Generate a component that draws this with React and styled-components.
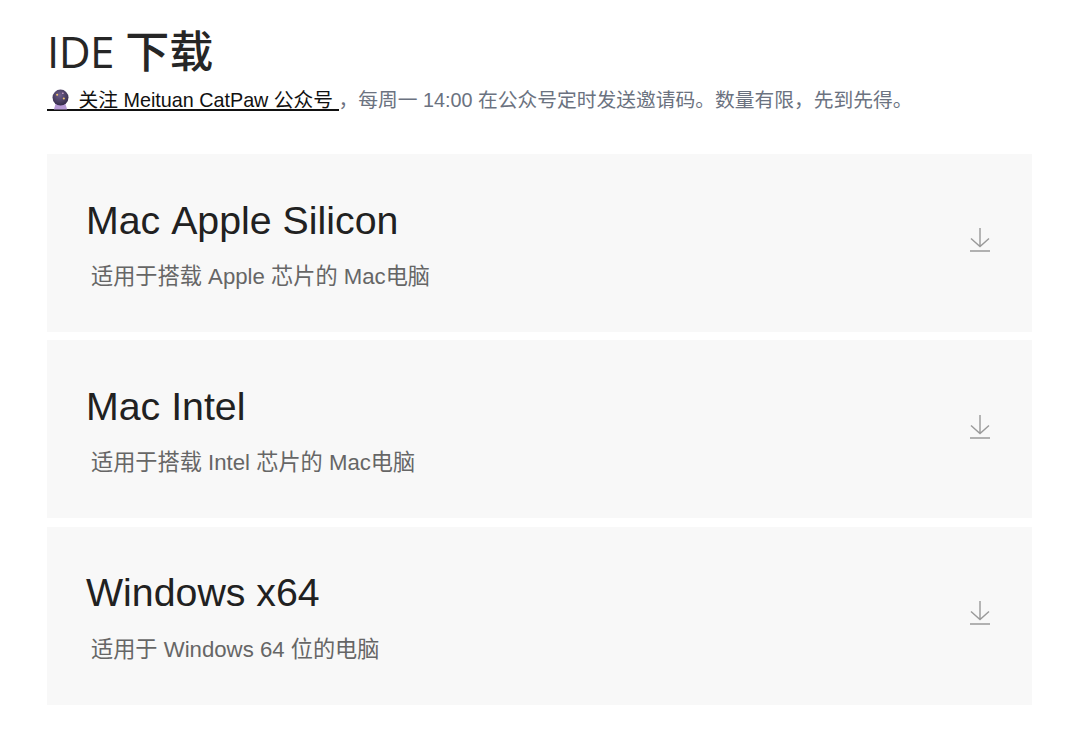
import React from 'react'
import styled, { createGlobalStyle } from 'styled-components'

const downloads = [
  { title: 'Mac Apple Silicon', desc: '适用于搭载 Apple 芯片的 Mac电脑' },
  { title: 'Mac Intel', desc: '适用于搭载 Intel 芯片的 Mac电脑' },
  { title: 'Windows x64', desc: '适用于 Windows 64 位的电脑' },
]

function CrystalBall() {
  return (
    <BallIcon viewBox="0 0 20 22">
      <defs>
        <radialGradient id="ball" cx="0.45" cy="0.35" r="0.75">
          <stop offset="0" stopColor="#6f5f8c" />
          <stop offset="1" stopColor="#2c2440" />
        </radialGradient>
      </defs>
      <path d="M5 15h10l2 6.5H3z" fill="#b79ad6" />
      <circle cx="10" cy="9" r="8.4" fill="url(#ball)" />
      <circle cx="6.5" cy="6" r="1.1" fill="#f2c66d" />
      <circle cx="12.5" cy="4.4" r="0.8" fill="#e9b7e0" />
      <circle cx="13.5" cy="10" r="1.1" fill="#f2c66d" />
    </BallIcon>
  )
}

function DownloadIcon() {
  return (
    <ArrowIcon viewBox="0 0 20 24">
      <path d="M10 0V18.5M1 10.5L10 18.5L19 10.5M0 23H20" />
    </ArrowIcon>
  )
}

export default function App() {
  return (
    <Page>
      <GlobalStyle />
      <Heading><Latin>IDE</Latin> <strong>下载</strong></Heading>
      <Intro>
        <FollowLink href="#"><CrystalBall /> 关注 Meituan CatPaw 公众号 </FollowLink>
        ，每周一 14:00 在公众号定时发送邀请码。数量有限，先到先得。
      </Intro>
      <CardList>
        {downloads.map((item) => (
          <Card key={item.title}>
            <CardText>
              <CardTitle>{item.title}</CardTitle>
              <CardDesc>{item.desc}</CardDesc>
            </CardText>
            <DownloadIcon />
          </Card>
        ))}
      </CardList>
    </Page>
  )
}

const GlobalStyle = createGlobalStyle`
  html, body {
    margin: 0;
    background: #fff;
  }
`
const Page = styled.div`
  box-sizing: border-box;
  width: 1080px;
  height: 744px;
  overflow: hidden;
  padding: 19px 48px 0 47px;
  font-family: "Liberation Sans", "Noto Sans CJK SC", sans-serif;
`
const Heading = styled.h1`
  margin: 0;
  height: 60px;
  font-family: "Open Sans", "Noto Sans CJK SC", sans-serif;
  font-size: 44px;
  line-height: 60px;
  font-weight: 400;
  color: #262626;

  & strong {
    font-family: "Noto Sans CJK SC", sans-serif;
    font-weight: 500;
  }
`
const Latin = styled.span`
  letter-spacing: -0.6px;
`
const Intro = styled.p`
  margin: 8px 0 0;
  height: 30px;
  font-size: 19.75px;
  line-height: 26px;
  color: #6b7280;
  white-space: nowrap;
`
const FollowLink = styled.a`
  padding-left: 4px;
  color: #111;
  text-decoration: none;
  background: linear-gradient(#111, #111) no-repeat 0 100% / 100% 2px;
`
const BallIcon = styled.svg`
  width: 19px;
  height: 21px;
  margin-right: 3px;
  vertical-align: -3px;
`
const CardList = styled.div`
  display: flex;
  flex-direction: column;
  gap: 8.4px;
  margin-top: 37px;
`
const Card = styled.div`
  box-sizing: border-box;
  display: flex;
  align-items: center;
  justify-content: space-between;
  height: 178px;
  padding: 0 42px 0.5px 39px;
  background: #f8f8f8;
`
const CardText = styled.div`
  display: flex;
  flex-direction: column;
  gap: 16.5px;
`
const CardTitle = styled.div`
  font-size: 39.3px;
  line-height: 52px;
  font-kerning: none;
  color: #212121;
`
const CardDesc = styled.div`
  padding-left: 5px;
  font-size: 22.2px;
  line-height: 30px;
  color: #666;
`
const ArrowIcon = styled.svg`
  width: 20px;
  height: 24px;
  margin-bottom: 5px;
  fill: none;
  stroke: #999;
  stroke-width: 1.4;
`
